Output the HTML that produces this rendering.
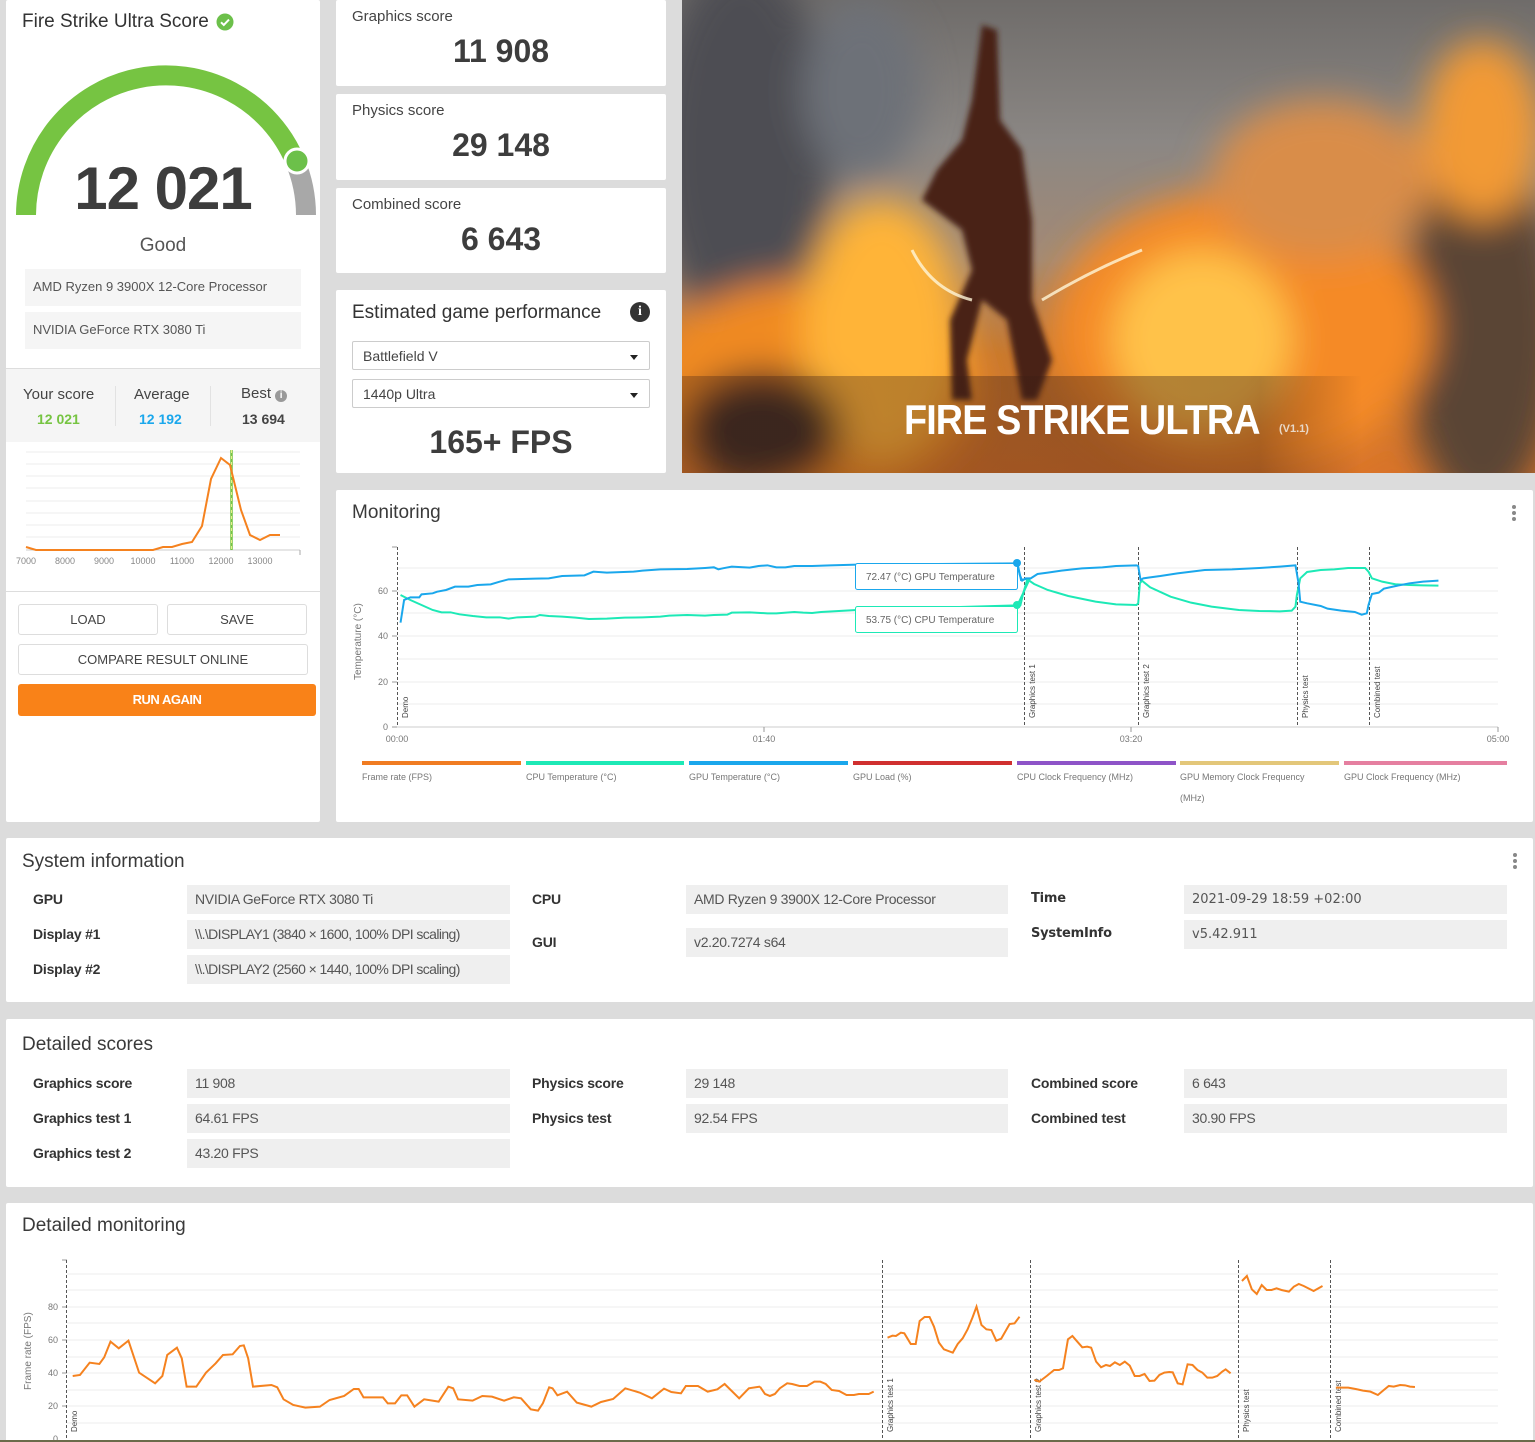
<!DOCTYPE html>
<html><head><meta charset="utf-8">
<style>
*{margin:0;padding:0;box-sizing:border-box}
body{width:1535px;height:1442px;background:#dcdcdc;position:relative;overflow:hidden;font-family:"Liberation Sans",sans-serif;color:#333}
.card{position:absolute;background:#fff;border-radius:2px}
.a{position:absolute;white-space:nowrap}
.h{font-size:19px;color:#3a3a3a}
.sl{font-size:15px;color:#444}
.big{font-size:32px;font-weight:bold;color:#3d3d3d;text-align:center;width:330px;left:0}
.box{position:absolute;background:#efefef;height:29px;font-size:14px;letter-spacing:-0.3px;color:#555;padding:6px 8px;white-space:nowrap;overflow:hidden}
.lb{position:absolute;font-weight:bold;font-size:14px;letter-spacing:-0.2px;color:#333;white-space:nowrap}
.btn{position:absolute;border:1px solid #ddd;border-radius:3px;background:#fff;font-size:13px;color:#444;text-align:center;line-height:30px}
.sel{position:absolute;left:16px;width:298px;height:29px;border:1px solid #ccc;border-radius:2px;font-size:14px;color:#444;padding:6px 10px}
.sel:after{content:"";position:absolute;right:11px;top:13px;border:4px solid transparent;border-top:5px solid #222}
.dots{position:absolute;width:4px}
.dots i{display:block;width:4px;height:4px;border-radius:2px;background:#888;margin-bottom:2px}
</style></head><body>

<div class="card" style="left:6px;top:0;width:314px;height:822px">
  <div class="a" style="left:16px;top:11px;font-size:19px;color:#333">Fire Strike Ultra Score</div>
  <svg class="a" style="left:210px;top:13px" width="18" height="18"><circle cx="9" cy="9" r="8.5" fill="#6cc04a"/><path d="M5 9.3l2.8 2.7L13 6.6" stroke="#fff" stroke-width="2" fill="none"/></svg>
</div>
<svg class="a" style="left:0;top:0" width="330" height="230">
  <path d="M26 215 A140 140 0 0 1 295 161" stroke="#76c442" stroke-width="20" fill="none"/>
  <path d="M295 161 A140 140 0 0 1 306 215" stroke="#a8a8a8" stroke-width="20" fill="none"/>
  <circle cx="297" cy="161" r="12" fill="#6cc04a" stroke="#fff" stroke-width="3"/>
</svg>
<div class="a" style="left:6px;width:314px;text-align:center;top:154px;font-size:60px;font-weight:bold;color:#3d3d3d;letter-spacing:-1px">12 021</div>
<div class="a" style="left:6px;width:314px;text-align:center;top:235px;font-size:19px;color:#555">Good</div>
<div class="box" style="left:25px;top:269px;width:276px;height:37px;padding:10px 8px;background:#f5f5f5;font-size:13px;letter-spacing:0">AMD Ryzen 9 3900X 12-Core Processor</div>
<div class="box" style="left:25px;top:312px;width:276px;height:37px;padding:10px 8px;background:#f5f5f5;font-size:13px;letter-spacing:0">NVIDIA GeForce RTX 3080 Ti</div>
<div class="a" style="left:6px;top:368px;width:314px;height:74px;background:#f5f5f5;border-top:1px solid #ddd"></div>
<div class="a" style="left:115px;top:386px;width:1px;height:40px;background:#e2e2e2"></div>
<div class="a" style="left:210px;top:386px;width:1px;height:40px;background:#e2e2e2"></div>
<div class="a" style="left:23px;top:386px;font-size:15px;color:#444">Your score</div>
<div class="a" style="left:37px;top:411px;font-size:14px;font-weight:bold;color:#76c442">12 021</div>
<div class="a" style="left:134px;top:386px;font-size:15px;color:#444">Average</div>
<div class="a" style="left:139px;top:411px;font-size:14px;font-weight:bold;color:#1aa7ec">12 192</div>
<div class="a" style="left:241px;top:385px;font-size:15px;color:#444">Best <span style="display:inline-block;width:12px;height:12px;border-radius:6px;background:#999;color:#fff;font-size:10px;text-align:center;line-height:12px;font-weight:bold">i</span></div>
<div class="a" style="left:242px;top:411px;font-size:14px;font-weight:bold;color:#444">13 694</div>
<svg class="a" style="left:0;top:440px" width="320" height="140">
  <g stroke="#ececec" stroke-width="1">
    <line x1="26" y1="12" x2="300" y2="12"/><line x1="26" y1="24" x2="300" y2="24"/><line x1="26" y1="36" x2="300" y2="36"/><line x1="26" y1="48" x2="300" y2="48"/><line x1="26" y1="61" x2="300" y2="61"/><line x1="26" y1="73" x2="300" y2="73"/><line x1="26" y1="85" x2="300" y2="85"/><line x1="26" y1="97" x2="300" y2="97"/>
  </g>
  <line x1="26" y1="110" x2="300" y2="110" stroke="#ccc"/>
  <line x1="300" y1="110" x2="300" y2="115" stroke="#aaa"/>
  <line x1="231.5" y1="10" x2="231.5" y2="110" stroke="#76c442" stroke-width="2.5"/>
  <line x1="231.5" y1="10" x2="231.5" y2="110" stroke="#e8f08a" stroke-width="1" stroke-dasharray="3 3"/>
  <polyline fill="none" stroke="#f5821f" stroke-width="2" points="26,107 36,110 153,110 163,107 172,107 182,104 192,102 202,86 211,39 221,18 230,25 241,70 250,95 260,100 270,95 280,95"/>
  <g font-size="9" fill="#888" text-anchor="middle"><text x="26" y="124">7000</text><text x="65" y="124">8000</text><text x="104" y="124">9000</text><text x="143" y="124">10000</text><text x="182" y="124">11000</text><text x="221" y="124">12000</text><text x="260" y="124">13000</text></g>
</svg>
<div class="a" style="left:6px;top:591px;width:314px;height:1px;background:#ddd"></div>
<div class="btn" style="left:18px;top:604px;width:140px;height:31px">LOAD</div>
<div class="btn" style="left:167px;top:604px;width:140px;height:31px">SAVE</div>
<div class="btn" style="left:18px;top:644px;width:290px;height:31px">COMPARE RESULT ONLINE</div>
<div class="a" style="left:18px;top:684px;width:298px;height:32px;background:#f98218;border-radius:3px;color:#fff;font-size:13px;font-weight:bold;text-align:center;line-height:32px;letter-spacing:-0.5px">RUN AGAIN</div>

<div class="card" style="left:336px;top:0;width:330px;height:86px"><div class="a sl" style="left:16px;top:8px">Graphics score</div><div class="a big" style="top:33px">11 908</div></div>
<div class="card" style="left:336px;top:94px;width:330px;height:86px"><div class="a sl" style="left:16px;top:8px">Physics score</div><div class="a big" style="top:33px">29 148</div></div>
<div class="card" style="left:336px;top:188px;width:330px;height:85px"><div class="a sl" style="left:16px;top:8px">Combined score</div><div class="a big" style="top:33px">6 643</div></div>
<div class="card" style="left:336px;top:290px;width:330px;height:183px">
  <div class="a" style="left:16px;top:12px;font-size:19px;color:#333">Estimated game performance</div>
  <div class="a" style="left:294px;top:12px;width:20px;height:20px;border-radius:10px;background:#333;color:#fff;font-weight:bold;font-size:14px;text-align:center;line-height:20px;font-family:'Liberation Serif',serif">i</div>
  <div class="sel" style="top:51px">Battlefield V</div>
  <div class="sel" style="top:89px">1440p Ultra</div>
  <div class="a big" style="top:134px">165+ FPS</div>
</div>

<!-- fire image -->
<div class="a" style="left:682px;top:0;width:853px;height:473px;overflow:hidden;background:linear-gradient(180deg,#6f6c6a 0%,#8b8784 30%,#a48a74 55%,#c8782e 75%,#d9742a 100%)">
  <svg class="a" style="left:0;top:0" width="853" height="473">
    <defs>
      <filter id="b1"><feGaussianBlur stdDeviation="18"/></filter>
      <filter id="b2"><feGaussianBlur stdDeviation="3"/></filter>
    </defs>
    <g filter="url(#b1)">
      <ellipse cx="60" cy="150" rx="90" ry="190" fill="#4e4e52"/>
      <ellipse cx="180" cy="90" rx="60" ry="90" fill="#6d7178"/>
      <ellipse cx="800" cy="330" rx="80" ry="180" fill="#5a4436"/>
      <ellipse cx="130" cy="390" rx="170" ry="110" fill="#f08a22"/>
      <ellipse cx="200" cy="330" rx="80" ry="130" fill="#ffb437"/>
      <ellipse cx="560" cy="330" rx="190" ry="140" fill="#f58a25"/>
      <ellipse cx="520" cy="340" rx="90" ry="90" fill="#ffc24a"/>
      <ellipse cx="640" cy="180" rx="110" ry="80" fill="#d98d4a"/>
      <ellipse cx="800" cy="130" rx="60" ry="90" fill="#f29a35"/>
      <ellipse cx="80" cy="430" rx="80" ry="60" fill="#3a2a22"/>
    </g>
    <g filter="url(#b2)" fill="#4a2418">
      <path d="M300 25 L315 30 L318 120 L340 150 L350 220 L350 300 L370 360 L355 400 L340 400 L325 320 L300 300 L285 360 L290 400 L270 400 L268 320 L290 270 L280 230 L240 200 L255 170 L280 140 L290 100 Z"/>
    </g>
    <path d="M230 250 Q250 290 290 300" stroke="#fff6d8" stroke-width="3" fill="none" opacity=".8"/>
    <path d="M360 300 Q410 270 460 250" stroke="#fff6d8" stroke-width="3" fill="none" opacity=".8"/>
  </svg>
  <div class="a" style="left:0;top:376px;width:680px;height:97px;background:linear-gradient(90deg,rgba(60,30,20,.3),rgba(60,30,20,.4) 85%,rgba(60,30,20,0))"></div>
  <div class="a" style="left:222px;top:396px;font-size:42px;font-weight:bold;color:#fff;letter-spacing:-1px;transform:scaleX(.9);transform-origin:left">FIRE STRIKE ULTRA</div>
  <div class="a" style="left:597px;top:423px;font-size:11px;font-weight:bold;color:#e8d8c8">(V1.1)</div>
</div>

<div class="card" style="left:336px;top:490px;width:1197px;height:332px">
  <div class="a h" style="left:16px;top:12px">Monitoring</div>
  <div class="dots" style="left:1176px;top:15px"><i></i><i></i><i></i></div>
</div>
<svg class="a" style="left:0;top:0" width="1535" height="1442">
  <g stroke="#ececec"><line x1="397" y1="568" x2="1498" y2="568"/><line x1="397" y1="591" x2="1498" y2="591"/><line x1="397" y1="613" x2="1498" y2="613"/><line x1="397" y1="636" x2="1498" y2="636"/><line x1="397" y1="659" x2="1498" y2="659"/><line x1="397" y1="682" x2="1498" y2="682"/><line x1="397" y1="704" x2="1498" y2="704"/></g>
  <line x1="397" y1="727" x2="1498" y2="727" stroke="#ccc"/>
  <g stroke="#999"><line x1="392" y1="547" x2="397" y2="547"/><line x1="392" y1="591" x2="397" y2="591"/><line x1="392" y1="636" x2="397" y2="636"/><line x1="392" y1="682" x2="397" y2="682"/><line x1="392" y1="727" x2="397" y2="727"/><line x1="764" y1="727" x2="764" y2="732"/><line x1="1131" y1="727" x2="1131" y2="732"/><line x1="1498" y1="727" x2="1498" y2="732"/></g>
  <g stroke="#555" stroke-dasharray="3 2"><line x1="397.5" y1="547" x2="397.5" y2="727"/><line x1="1024.5" y1="547" x2="1024.5" y2="727"/><line x1="1138.5" y1="547" x2="1138.5" y2="727"/><line x1="1297.5" y1="547" x2="1297.5" y2="727"/><line x1="1369.5" y1="547" x2="1369.5" y2="727"/></g>
  <g font-size="9" fill="#777"><text x="388" y="594" text-anchor="end">60</text><text x="388" y="639" text-anchor="end">40</text><text x="388" y="685" text-anchor="end">20</text><text x="388" y="730" text-anchor="end">0</text>
  <text x="397" y="742" text-anchor="middle">00:00</text><text x="764" y="742" text-anchor="middle">01:40</text><text x="1131" y="742" text-anchor="middle">03:20</text><text x="1498" y="742" text-anchor="middle">05:00</text>
  <text transform="translate(361,680) rotate(-90)" font-size="10">Temperature (°C)</text>
  <g fill="#444" font-size="8"><text transform="translate(408,718) rotate(-90)">Demo</text><text transform="translate(1035,718) rotate(-90)">Graphics test 1</text><text transform="translate(1149,718) rotate(-90)">Graphics test 2</text><text transform="translate(1308,718) rotate(-90)">Physics test</text><text transform="translate(1380,718) rotate(-90)">Combined test</text></g></g>
  <g fill="none" stroke-width="2">
  <g transform="translate(330,480) scale(0.4464,0.3333)">
   <polyline vector-effect="non-scaling-stroke" stroke="#1de9b6" points="158,345 180,360 200,372 230,390 250,397 270,397 290,403 320,408 350,412 380,412 400,416 420,412 440,411 460,410 470,405 490,408 520,410 550,413 580,417 620,416 660,413 700,412 740,410 760,407 800,405 840,407 860,405 890,404 900,398 940,397 980,400 1000,400 1040,396 1060,398 1080,399 1100,396 1140,393 1180,390 1540,376 1556,330 1568,295"/>
   <polyline vector-effect="non-scaling-stroke" stroke="#1aa7ec" points="158,428 166,360 180,352 200,352 205,343 230,340 240,335 260,330 280,320 310,320 330,315 360,313 380,305 400,298 430,297 460,296 490,295 520,288 570,286 590,275 620,278 680,275 700,272 740,268 800,267 840,264 860,262 870,268 880,265 900,260 940,263 960,258 980,256 1000,262 1020,262 1040,258 1080,258 1120,256 1180,254 1540,250 1548,300 1556,298 1568,295"/>
  </g>
  <g transform="translate(1000,530) scale(0.3412,0.3333)">
   <polyline vector-effect="non-scaling-stroke" stroke="#1de9b6" points="50,227 60,225 68,190 80,148 100,162 140,180 200,198 280,215 340,223 400,225 405,220 410,160 416,152 440,172 500,200 560,218 620,230 700,240 760,243 820,244 855,242 866,230 870,195 880,145 900,126 940,120 980,118 1020,114 1070,114 1080,125 1090,145 1120,155 1160,163 1200,165 1240,166 1285,167"/>
   <polyline vector-effect="non-scaling-stroke" stroke="#1aa7ec" points="50,100 58,135 65,152 75,145 90,145 110,132 140,128 180,122 240,115 300,112 340,108 400,106 405,108 412,150 420,145 440,142 470,138 520,130 600,120 680,118 760,114 820,110 866,106 875,160 880,215 900,220 940,228 960,236 1000,242 1040,246 1060,254 1075,250 1080,225 1090,192 1110,188 1125,176 1160,168 1200,160 1240,155 1285,152"/>
  </g></g>
  <rect x="855.5" y="563.5" width="162" height="26" rx="2" fill="#fff" stroke="#1aa7ec"/>
  <rect x="855.5" y="606.5" width="162" height="26" rx="2" fill="#fff" stroke="#1de9b6"/>
  <text x="866" y="580" font-size="10" fill="#666">72.47 (°C) GPU Temperature</text>
  <text x="866" y="623" font-size="10" fill="#666">53.75 (°C) CPU Temperature</text>
  <circle cx="1017" cy="563" r="4" fill="#1aa7ec"/><circle cx="1017" cy="605" r="4" fill="#1de9b6"/>
  <g><rect x="362" y="761" width="159" height="4" fill="#f07c22"/><rect x="526" y="761" width="158" height="4" fill="#1de9b6"/><rect x="689" y="761" width="159" height="4" fill="#1aa7ec"/><rect x="853" y="761" width="159" height="4" fill="#d0302f"/><rect x="1017" y="761" width="159" height="4" fill="#8e54c8"/><rect x="1180" y="761" width="159" height="4" fill="#e3c77a"/><rect x="1344" y="761" width="163" height="4" fill="#e57fa0"/></g>
  <g font-size="9" fill="#777"><text x="362" y="780">Frame rate (FPS)</text><text x="526" y="780">CPU Temperature (°C)</text><text x="689" y="780">GPU Temperature (°C)</text><text x="853" y="780">GPU Load (%)</text><text x="1017" y="780">CPU Clock Frequency (MHz)</text><text x="1180" y="780">GPU Memory Clock Frequency</text><text x="1180" y="801">(MHz)</text><text x="1344" y="780">GPU Clock Frequency (MHz)</text></g>
</svg>

<div class="card" style="left:6px;top:838px;width:1527px;height:164px">
  <div class="a h" style="left:16px;top:13px">System information</div>
  <div class="dots" style="left:1507px;top:15px"><i></i><i></i><i></i></div>
</div>
<div class="lb" style="left:33px;top:891px">GPU</div><div class="box" style="left:187px;top:885px;width:323px">NVIDIA GeForce RTX 3080 Ti</div>
<div class="lb" style="left:33px;top:926px">Display #1</div><div class="box" style="left:187px;top:920px;width:323px;letter-spacing:-0.6px">\\.\DISPLAY1 (3840 × 1600, 100% DPI scaling)</div>
<div class="lb" style="left:33px;top:961px">Display #2</div><div class="box" style="left:187px;top:955px;width:323px;letter-spacing:-0.6px">\\.\DISPLAY2 (2560 × 1440, 100% DPI scaling)</div>
<div class="lb" style="left:532px;top:891px">CPU</div><div class="box" style="left:686px;top:885px;width:322px">AMD Ryzen 9 3900X 12-Core Processor</div>
<div class="lb" style="left:532px;top:934px">GUI</div><div class="box" style="left:686px;top:928px;width:322px">v2.20.7274 s64</div>
<div class="lb" style="left:1031px;top:891px;font-family:'DejaVu Sans',sans-serif;font-size:13px">Time</div><div class="box" style="left:1184px;top:885px;width:323px;font-family:'DejaVu Sans',sans-serif;font-size:13px;letter-spacing:0;padding-top:7px">2021-09-29 18:59 +02:00</div>
<div class="lb" style="left:1031px;top:926px;font-family:'DejaVu Sans',sans-serif;font-size:13px">SystemInfo</div><div class="box" style="left:1184px;top:920px;width:323px;font-family:'DejaVu Sans',sans-serif;font-size:13px;letter-spacing:0;padding-top:7px">v5.42.911</div>

<div class="card" style="left:6px;top:1019px;width:1527px;height:168px">
  <div class="a h" style="left:16px;top:15px">Detailed scores</div>
</div>
<div class="lb" style="left:33px;top:1075px">Graphics score</div><div class="box" style="left:187px;top:1069px;width:323px">11 908</div>
<div class="lb" style="left:33px;top:1110px">Graphics test 1</div><div class="box" style="left:187px;top:1104px;width:323px">64.61 FPS</div>
<div class="lb" style="left:33px;top:1145px">Graphics test 2</div><div class="box" style="left:187px;top:1139px;width:323px">43.20 FPS</div>
<div class="lb" style="left:532px;top:1075px">Physics score</div><div class="box" style="left:686px;top:1069px;width:322px">29 148</div>
<div class="lb" style="left:532px;top:1110px">Physics test</div><div class="box" style="left:686px;top:1104px;width:322px">92.54 FPS</div>
<div class="lb" style="left:1031px;top:1075px">Combined score</div><div class="box" style="left:1184px;top:1069px;width:323px">6 643</div>
<div class="lb" style="left:1031px;top:1110px">Combined test</div><div class="box" style="left:1184px;top:1104px;width:323px">30.90 FPS</div>

<div class="card" style="left:6px;top:1203px;width:1527px;height:239px">
  <div class="a h" style="left:16px;top:12px">Detailed monitoring</div>
</div>
<svg class="a" style="left:0;top:0" width="1535" height="1442">
  <g stroke="#ececec"><line x1="67" y1="1274" x2="1498" y2="1274"/><line x1="67" y1="1290" x2="1498" y2="1290"/><line x1="67" y1="1307" x2="1498" y2="1307"/><line x1="67" y1="1323" x2="1498" y2="1323"/><line x1="67" y1="1340" x2="1498" y2="1340"/><line x1="67" y1="1357" x2="1498" y2="1357"/><line x1="67" y1="1373" x2="1498" y2="1373"/><line x1="67" y1="1390" x2="1498" y2="1390"/><line x1="67" y1="1406" x2="1498" y2="1406"/><line x1="67" y1="1423" x2="1498" y2="1423"/></g>
  <g stroke="#999"><line x1="62" y1="1260" x2="67" y2="1260"/><line x1="62" y1="1307" x2="67" y2="1307"/><line x1="62" y1="1340" x2="67" y2="1340"/><line x1="62" y1="1373" x2="67" y2="1373"/><line x1="62" y1="1406" x2="67" y2="1406"/></g>
  <g stroke="#555" stroke-dasharray="3 2"><line x1="66.5" y1="1260" x2="66.5" y2="1442"/><line x1="882.5" y1="1260" x2="882.5" y2="1442"/><line x1="1030.5" y1="1260" x2="1030.5" y2="1442"/><line x1="1238.5" y1="1260" x2="1238.5" y2="1442"/><line x1="1330.5" y1="1260" x2="1330.5" y2="1442"/></g>
  <g font-size="9" fill="#777" text-anchor="end"><text x="58" y="1310">80</text><text x="58" y="1343">60</text><text x="58" y="1376">40</text><text x="58" y="1409">20</text><text x="58" y="1442">0</text></g>
  <text transform="translate(31,1390) rotate(-90)" font-size="10" fill="#777">Frame rate (FPS)</text>
  <g fill="#444" font-size="8"><text transform="translate(77,1432) rotate(-90)">Demo</text><text transform="translate(893,1432) rotate(-90)">Graphics test 1</text><text transform="translate(1041,1432) rotate(-90)">Graphics test 2</text><text transform="translate(1249,1432) rotate(-90)">Physics test</text><text transform="translate(1341,1432) rotate(-90)">Combined test</text></g>
  <g fill="none" stroke="#f5821f" stroke-width="2">
  <g transform="translate(0,1240) scale(0.4847,0.3333)">
   <polyline vector-effect="non-scaling-stroke" points="150,408 165,405 185,368 205,372 215,352 228,305 245,325 265,302 287,398 320,430 335,408 345,345 365,323 375,355 385,440 405,440 425,398 445,370 460,345 480,343 495,318 503,316 512,355 522,440 560,435 572,442 585,478 605,495 630,503 660,500 680,480 710,468 730,447 740,447 750,472 790,472 800,490 815,490 828,466 840,466 855,500 875,478 905,485 925,440 935,445 945,478 975,482 995,468 1015,470 1040,482 1060,472 1075,475 1095,508 1110,512 1120,490 1133,442 1140,445 1150,466 1170,455 1190,488 1220,500 1240,486 1265,477 1290,445 1320,458 1345,475 1370,446 1385,456 1405,460 1415,438 1440,438 1460,455 1480,448 1495,432 1525,475 1545,445 1568,440"/>
  </g>
  <g transform="translate(760,1240) scale(0.4943,0.3333)">
   <polyline vector-effect="non-scaling-stroke" points="0,440 10,462 20,468 30,462 40,445 55,430 65,432 80,438 95,438 110,425 122,425 133,432 145,450 160,453 175,465 190,465 200,462 220,462 230,455"/>
   <polyline vector-effect="non-scaling-stroke" points="258,293 268,287 275,288 285,278 292,280 305,312 315,312 323,243 333,231 343,231 352,260 362,308 372,328 390,338 400,312 410,295 420,268 430,232 438,200 448,255 458,268 468,270 478,302 488,296 505,252 515,250 525,230"/>
   <polyline vector-effect="non-scaling-stroke" points="555,420 565,425 580,408 595,390 605,390 613,385 623,298 632,288 642,305 652,322 662,320 670,323 680,365 690,382 700,375 708,378 718,367 728,375 738,365 748,377 758,408 768,408 778,402 788,423 798,422 808,405 818,398 828,396 835,397 845,430 855,433 865,373 875,375 885,390 895,398 905,413 915,413 925,408 935,395 942,388 952,400"/>
   <polyline vector-effect="non-scaling-stroke" points="975,123 985,108 995,148 1005,162 1015,135 1025,150 1035,150 1045,145 1055,150 1070,155 1080,140 1090,132 1100,138 1120,153 1138,138"/>
   <polyline vector-effect="non-scaling-stroke" points="1165,443 1190,443 1205,447 1220,452 1235,455 1250,465 1262,450 1272,438 1282,440 1295,435 1305,436 1315,440 1325,441"/>
  </g></g>
  <rect x="0" y="1440" width="1535" height="2" fill="#6b6b4a"/>
</svg>
</body></html>
